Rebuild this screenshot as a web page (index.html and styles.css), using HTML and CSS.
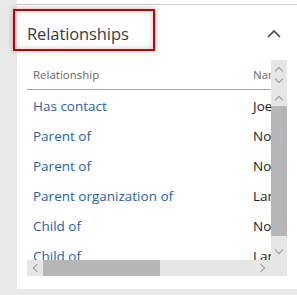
FILE: index.html
```html
<!DOCTYPE html>
<html>
<head>
<meta charset="utf-8">
<link rel="stylesheet" href="styles.css">
</head>
<body>
<div class="page">
  <div class="prev"></div>
  <section class="section">
    <div class="head">
      <h2 class="title">Relationships</h2>
      <svg class="chev" width="14" height="8" viewBox="0 0 14 8"><path d="M1 7 L7 1 L13 7" fill="none" stroke="#444" stroke-width="1.6"/></svg>
      <div class="callout"></div>
    </div>
    <div class="grid">
      <div class="top">
        <div class="clip">
          <div class="row hdr">
            <div class="c1">Relationship</div>
            <div class="c2">Name</div>
          </div>
        </div>
        <div class="vbar hbar-head">
          <span class="arr up"></span>
          <span class="arr down"></span>
        </div>
      </div>
      <div class="body">
        <div class="clip">
          <div class="row"><div class="c1 link">Has contact</div><div class="c2">Joe Healy</div></div>
          <div class="row"><div class="c1 link">Parent of</div><div class="c2">Northwind</div></div>
          <div class="row"><div class="c1 link">Parent of</div><div class="c2">Northwind</div></div>
          <div class="row"><div class="c1 link">Parent organization of</div><div class="c2">Lamna</div></div>
          <div class="row"><div class="c1 link">Child of</div><div class="c2">Northwind</div></div>
          <div class="row"><div class="c1 link">Child of</div><div class="c2">Lamna</div></div>
        </div>
        <div class="vbar">
          <div class="btn"><span class="arr up"></span></div>
          <div class="thumb"></div>
          <div class="track"></div>
          <div class="btn"><span class="arr down"></span></div>
        </div>
      </div>
      <div class="hbar">
        <div class="hbtn"><span class="arr left"></span></div>
        <div class="hthumb"></div>
        <div class="htrack"></div>
        <div class="hbtn"><span class="arr right"></span></div>
        <div class="corner"></div>
      </div>
    </div>
  </section>
</div>
</body>
</html>
```
FILE: styles.css
```css
html, body {
  margin: 0;
  padding: 0;
  background: #e9e9e9;
  font-family: "Open Sans", "Noto Sans", sans-serif;
}
.page {
  margin-left: 17px;
  width: 280px;
}
.prev {
  height: 4px;
  background: #fff;
}
.section {
  background: #fff;
  border-top: 1px solid #cfcfcf;
  height: 285px;
  box-sizing: border-box;
  padding: 0 10px 0 10px;
}
.head {
  position: relative;
  height: 55px;
  display: flex;
  align-items: center;
  justify-content: space-between;
}
.title {
  margin: 0;
  padding-top: 2px;
  font-weight: 400;
  font-size: 16.5px;
  color: #3a3a3a;
  letter-spacing: -0.1px;
}
.chev {
  margin-right: 6px;
  margin-top: 2px;
}
.callout {
  position: absolute;
  left: -14px;
  top: 4px;
  width: 138px;
  height: 38px;
  border: 2px solid #c00000;
  box-shadow: 0 0 6px rgba(0,0,0,0.28), inset 0 0 6px rgba(0,0,0,0.22);
}
.grid {
  width: 260px;
}
.top, .body {
  display: flex;
}
.clip {
  width: 244px;
  overflow: hidden;
}
.row {
  display: flex;
  width: 420px;
  height: 30px;
  box-sizing: border-box;
  padding-top: 2px;
  align-items: center;
  white-space: nowrap;
}
.c1 {
  width: 223px;
  flex: none;
  padding-left: 6px;
  box-sizing: border-box;
  font-size: 13.5px;
}
.c2 {
  padding-left: 3px;
  font-size: 13.5px;
  color: #222;
}
.hdr {
  height: 30px;
  padding-top: 0;
  border-bottom: 1px solid #a6a6a6;
  background: linear-gradient(to right, transparent 222px, #fff 222px, #fff 224px, transparent 224px);
}
.hdr .c1, .hdr .c2 {
  font-size: 11.5px;
  color: #666;
}
.link {
  color: #1e63a8;
}
.body .clip {
  height: 170px;
}
.vbar {
  width: 16px;
  background: #e6e6e6;
  display: flex;
  flex-direction: column;
  align-items: center;
}
.hbar-head {
  height: 30px;
  justify-content: center;
  gap: 6px;
}
.btn {
  height: 16px;
  width: 16px;
  display: flex;
  align-items: center;
  justify-content: center;
}
.thumb {
  height: 130px;
  width: 16px;
  background: #b6b6b6;
}
.track {
  flex: 1;
}
.arr {
  display: block;
  width: 5px;
  height: 5px;
  border-left: 1px solid #9a9a9a;
  border-top: 1px solid #9a9a9a;
}
.arr.up { transform: translateY(2px) rotate(45deg); }
.arr.down { transform: translateY(-2px) rotate(225deg); }
.arr.left { transform: translateX(2px) rotate(-45deg); }
.arr.right { transform: translateX(-2px) rotate(135deg); }
.hbar {
  display: flex;
  height: 16px;
  background: #e6e6e6;
}
.hbtn {
  width: 16px;
  height: 16px;
  display: flex;
  align-items: center;
  justify-content: center;
}
.hthumb {
  width: 117px;
  background: #b6b6b6;
}
.htrack {
  flex: 1;
}
.corner {
  width: 16px;
}
```
